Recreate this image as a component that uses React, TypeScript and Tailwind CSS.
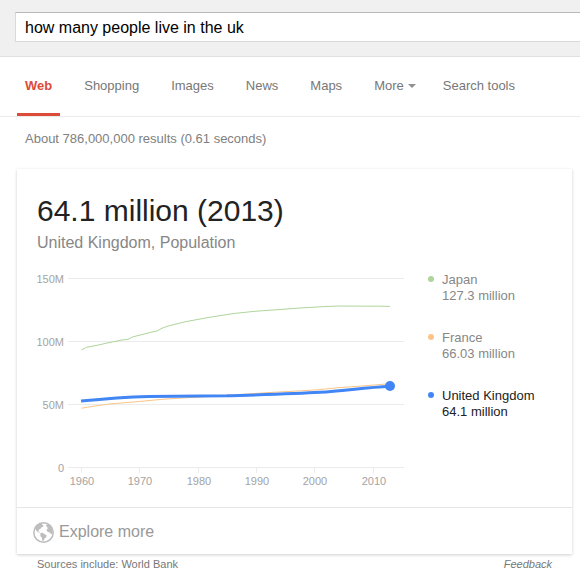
const TABS = ['Web', 'Shopping', 'Images', 'News', 'Maps'];

const LEGEND = [
  { name: 'Japan', value: '127.3 million', dot: 'bg-[#aed59b]', text: 'text-[#878787]' },
  { name: 'France', value: '66.03 million', dot: 'bg-[#fbc588]', text: 'text-[#878787]' },
  { name: 'United Kingdom', value: '64.1 million', dot: 'bg-[#4285f4]', text: 'text-[#222]' },
];

const Y_TICKS = [
  { label: '150M', y: 8 },
  { label: '100M', y: 71 },
  { label: '50M', y: 134 },
  { label: '0', y: 197 },
];

const X_TICKS = [
  { label: '1960', x: 44 },
  { label: '1970', x: 102 },
  { label: '1980', x: 161 },
  { label: '1990', x: 219 },
  { label: '2000', x: 277 },
  { label: '2010', x: 336 },
];

const JAPAN =
  'M44.5 80 L49.5 77.3 L60 75.3 L72 72.6 L85 70 L91 69.3 L96 66.8 L114 62.3 L120 61 L125 58.2 L131 56 L149 51.6 L172 47.4 L196 43.6 L219 41.2 L242 39.6 L260 38.2 L285 36.7 L302 36 L335 36.2 L340 36.1 L353 36.4';
const FRANCE =
  'M44.5 138.2 L58 136 L73 133.9 L102 131.5 L125 129.3 L149 127.8 L179 126 L202 124.6 L231 122.6 L260 121 L280 119.8 L300 117.8 L325 116 L353 113.7';
const UK =
  'M44 131 C62 129.2 84 127.2 112 126.4 C140 126.2 168 126.2 190 125.8 C222 124.8 258 123.8 283 122.3 C306 120.8 330 117.4 353 116.2';

function GlobeIcon() {
  return (
    <svg width="21" height="21" viewBox="0 0 21 21" aria-hidden="true">
      <circle cx="10.5" cy="10.5" r="9.7" fill="#fff" stroke="#bdbdbd" strokeWidth="1.5" />
      {/* north america */}
      <path
        fill="#bdbdbd"
        d="M4 3.6 L6.4 2 L9.4 1.2 L9 2.6 L10.6 3.4 L9.6 5 L8.2 5.6 L7.6 6.8 L5.8 7.4 L6.6 8.6 L5.2 8.4 L5.4 9.6 L7.2 10.4 L6.4 10.8 L4 9.4 L2.6 7.4 L2.2 6.4 Z"
      />
      {/* south america */}
      <path
        fill="#bdbdbd"
        d="M7.4 11 L9.6 10.8 L11.4 12 L13.8 13.4 L13 15.4 L11.4 16.8 L10.4 19 L9.2 18.6 L9 16 L7.4 14 Z"
      />
      {/* europe and africa */}
      <path
        fill="#bdbdbd"
        d="M13 2.4 L15.8 2.8 L18.2 5.6 L19.6 9 L19.2 12.2 L18 12 L16.8 10.4 L14.8 10 L13.6 8.4 L14.2 6.8 L15.6 6 L14.2 5.4 L13.4 4.2 Z"
      />
    </svg>
  );
}

function PopulationChart() {
  return (
    <svg width="367" height="220" viewBox="0 0 367 220" role="img" aria-label="Population, 1960 to 2013" className="shrink-0">
      {Y_TICKS.map(t => (
        <g key={t.label}>
          <rect x="31" y={t.y} width="336" height="1" fill="#ebebeb" />
          <text x="27" y={t.y + 5} textAnchor="end" fontSize="11" fill="#a3a3a3">{t.label}</text>
        </g>
      ))}
      {X_TICKS.map(t => (
        <g key={t.label}>
          <rect x={t.x} y="197" width="1" height="6" fill="#ebebeb" />
          <text x={t.x + 1} y="215" textAnchor="middle" fontSize="11" fill="#a3a3a3">{t.label}</text>
        </g>
      ))}
      <path d={JAPAN} fill="none" stroke="#aed59b" strokeWidth="1" />
      <path d={FRANCE} fill="none" stroke="#fbc588" strokeWidth="1" />
      <path d={UK} fill="none" stroke="#4285f4" strokeWidth="3" />
      <circle cx="353" cy="116" r="5" fill="#4285f4" />
    </svg>
  );
}

export default function App() {
  return (
    <div className="bg-white font-['Liberation_Sans',Arial,sans-serif] text-[13px]">
      {/* search box */}
      <header className="border-b border-[#e0e0e0] bg-[#f0f0f0] pt-3 pb-3.5 pl-[15px]">
        <input
          type="text"
          aria-label="Search"
          defaultValue="how many people live in the uk"
          className="block h-[30px] w-full border border-r-0 border-[#d9d9d9] border-t-[#b9b9b9] bg-white px-[9px] pt-0.5 text-base text-black outline-none"
        />
      </header>

      {/* tabs */}
      <nav className="flex h-[60px] items-stretch gap-4 border-b border-[#ebebeb] pl-[17px] leading-[57px] whitespace-nowrap text-[#777]">
        {TABS.map(tab => (
          <a
            key={tab}
            href="#"
            className={tab === 'Web' ? 'border-b-3 border-[#dd4b39] px-2 font-bold text-[#dd4b39]' : 'px-2'}
          >
            {tab}
          </a>
        ))}
        <div className="flex gap-[11px]">
          <button type="button" className="flex items-center gap-1 px-2 pb-[2px]">
            More
            <svg width="8" height="4" viewBox="0 0 8 4" aria-hidden="true"><path d="M0 0h8L4 4z" fill="#909090" /></svg>
          </button>
          <button type="button" className="px-2 pb-[2px]">Search tools</button>
        </div>
      </nav>

      <p className="pt-3.5 pl-[25px] leading-4 text-[#808080]">About 786,000,000 results (0.61 seconds)</p>

      {/* answer card */}
      <main className="mt-[22px] mr-2 ml-[17px] bg-white shadow-[0_1px_3px_rgba(0,0,0,0.2)]">
        <div className="px-5 pt-6">
          <h1 className="text-[30px] leading-9 text-[#222]">64.1 million (2013)</h1>
          <p className="text-base leading-7 text-[#878787]">United Kingdom, Population</p>
          <div className="flex gap-6 pt-[13px]">
            <PopulationChart />
            <ul className="flex flex-col gap-[26px] pt-0.5 leading-4 whitespace-nowrap">
              {LEGEND.map(l => (
                <li key={l.name} className={`flex gap-2 ${l.text}`}>
                  <span className={`mt-1 size-1.5 rounded-full ${l.dot}`} />
                  <span>
                    {l.name}
                    <br />
                    {l.value}
                  </span>
                </li>
              ))}
            </ul>
          </div>
        </div>
        <a href="#" className="mt-[17px] flex items-center gap-[5px] border-t border-[#e5e5e5] pt-3 pb-2.5 pl-4 text-base text-[#999]">
          <GlobeIcon />
          Explore more
        </a>
      </main>

      <footer className="flex justify-between pt-[3px] pr-7 pl-[37px] text-[11px] leading-[14px] text-[#777]">
        <span>Sources include: World Bank</span>
        <a href="#" className="italic">Feedback</a>
      </footer>
    </div>
  );
}
